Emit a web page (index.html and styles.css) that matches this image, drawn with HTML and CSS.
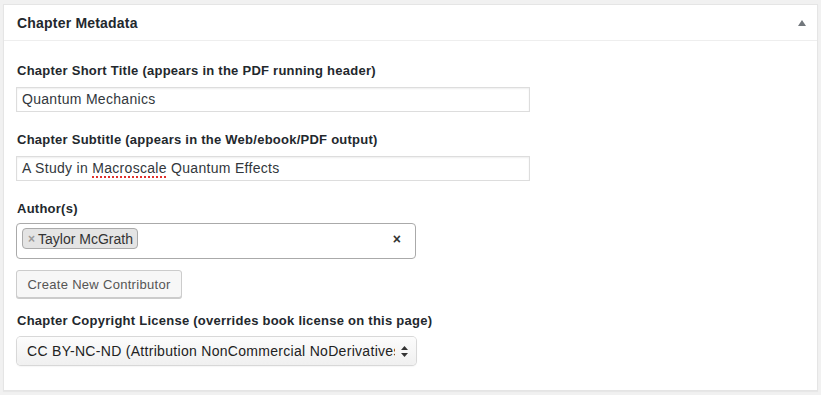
FILE: index.html
```
<!DOCTYPE html>
<html lang="en">
<head>
  <meta charset="UTF-8">
  <title>Chapter Metadata</title>
  <link rel="stylesheet" href="styles.css">
</head>
<body>
  <div class="postbox">
    <div class="postbox-header">
      <h2>Chapter Metadata</h2>
      <span class="toggle-arrow"></span>
    </div>

    <div class="inside">
      <label class="field-label">Chapter Short Title (appears in the PDF running header)</label>
      <div class="text-input">Quantum Mechanics</div>

      <label class="field-label">Chapter Subtitle (appears in the Web/ebook/PDF output)</label>
      <div class="text-input">A Study in <span class="misspelled">Macroscale</span> Quantum Effects</div>

      <label class="field-label label-tight">Author(s)</label>
      <div class="multi-select">
        <span class="choice"><span class="choice-remove">×</span>Taylor McGrath</span>
        <span class="clear-all">×</span>
      </div>

      <button class="button">Create New Contributor</button>

      <label class="field-label">Chapter Copyright License (overrides book license on this page)</label>
      <div class="select-box">
        <span class="select-value">CC BY-NC-ND (Attribution NonCommercial NoDerivatives)</span>
        <span class="select-arrows">
          <svg width="7" height="11" viewBox="0 0 7 11"><path d="M3.5 0 L7 4 L0 4 Z M3.5 11 L7 7 L0 7 Z" fill="#333"/></svg>
        </span>
      </div>
    </div>
  </div>
</body>
</html>
```

FILE: styles.css
```
* {
  margin: 0;
  padding: 0;
  box-sizing: border-box;
}

body {
  background: #f1f1f1;
  font-family: "Liberation Sans", Arial, sans-serif;
  color: #23282d;
  padding: 4px 3px;
  height: 395px;
  overflow: hidden;
}

.postbox {
  background: #fff;
  border: 1px solid #e5e5e5;
  box-shadow: 0 1px 1px rgba(0, 0, 0, 0.04);
  width: 815px;
  height: 387px;
}

.postbox-header {
  height: 36px;
  border-bottom: 1px solid #eee;
  display: flex;
  align-items: center;
  justify-content: space-between;
  padding: 0 11px 0 13px;
}

.postbox-header h2 {
  font-size: 14px;
  font-weight: bold;
  letter-spacing: 0.2px;
  color: #23282d;
}

.toggle-arrow {
  width: 0;
  height: 0;
  border-left: 4px solid transparent;
  border-right: 4px solid transparent;
  border-bottom: 6px solid #72777c;
  margin-top: 1px;
}

.inside {
  padding: 21px 12px 0 12px;
  display: flex;
  flex-direction: column;
  align-items: flex-start;
}

.field-label {
  display: block;
  font-size: 13px;
  font-weight: bold;
  letter-spacing: 0.25px;
  line-height: 17px;
  color: #23282d;
  margin-left: 1px;
  margin-bottom: 8px;
}

.label-tight {
  margin-bottom: 6px;
}

.text-input {
  width: 514px;
  height: 25px;
  border: 1px solid #ddd;
  box-shadow: inset 0 1px 2px rgba(0, 0, 0, 0.07);
  font-size: 14px;
  letter-spacing: 0.3px;
  line-height: 23px;
  color: #32373c;
  padding: 0 5px;
  margin-bottom: 19px;
  white-space: nowrap;
}

.misspelled {
  text-decoration: underline dotted #e0302c;
  text-underline-offset: 3px;
  text-decoration-thickness: 2px;
}

.multi-select {
  width: 400px;
  height: 36px;
  border: 1px solid #aaa;
  border-radius: 4px;
  display: flex;
  align-items: flex-start;
  justify-content: space-between;
  padding: 4px 14px 0 5px;
}

.choice {
  display: inline-flex;
  align-items: center;
  height: 21px;
  background: #e4e4e4;
  border: 1px solid #aaa;
  border-radius: 4px;
  padding: 0 4px 0 5px;
  font-size: 14px;
  color: #333;
}

.choice-remove {
  color: #999;
  font-weight: bold;
  font-size: 12px;
  margin-right: 3px;
}

.clear-all {
  font-weight: bold;
  font-size: 14px;
  color: #333;
  margin-top: 3px;
}

.button {
  margin-top: 11px;
  margin-bottom: 14px;
  height: 28px;
  padding: 0 10px;
  background: #f7f7f7;
  border: 1px solid #ccc;
  border-radius: 3px;
  box-shadow: 0 1px 0 #ccc;
  font-family: inherit;
  font-size: 13px;
  letter-spacing: 0.3px;
  color: #555;
  width: 166px;
}

.select-box {
  margin-left: 1px;
  width: 399px;
  height: 28px;
  border-radius: 4px;
  background: linear-gradient(#fcfcfc, #f0f0f0);
  box-shadow: 0 0 0 1px #d8d8d8, 0 1px 2px rgba(0, 0, 0, 0.12);
  display: flex;
  align-items: center;
  padding: 0 8px 0 10px;
  overflow: hidden;
}

.select-value {
  flex: 1;
  overflow: hidden;
  white-space: nowrap;
  font-size: 14px;
  letter-spacing: 0.3px;
  color: #222;
}

.select-arrows {
  display: flex;
  margin-left: 6px;
}
```
